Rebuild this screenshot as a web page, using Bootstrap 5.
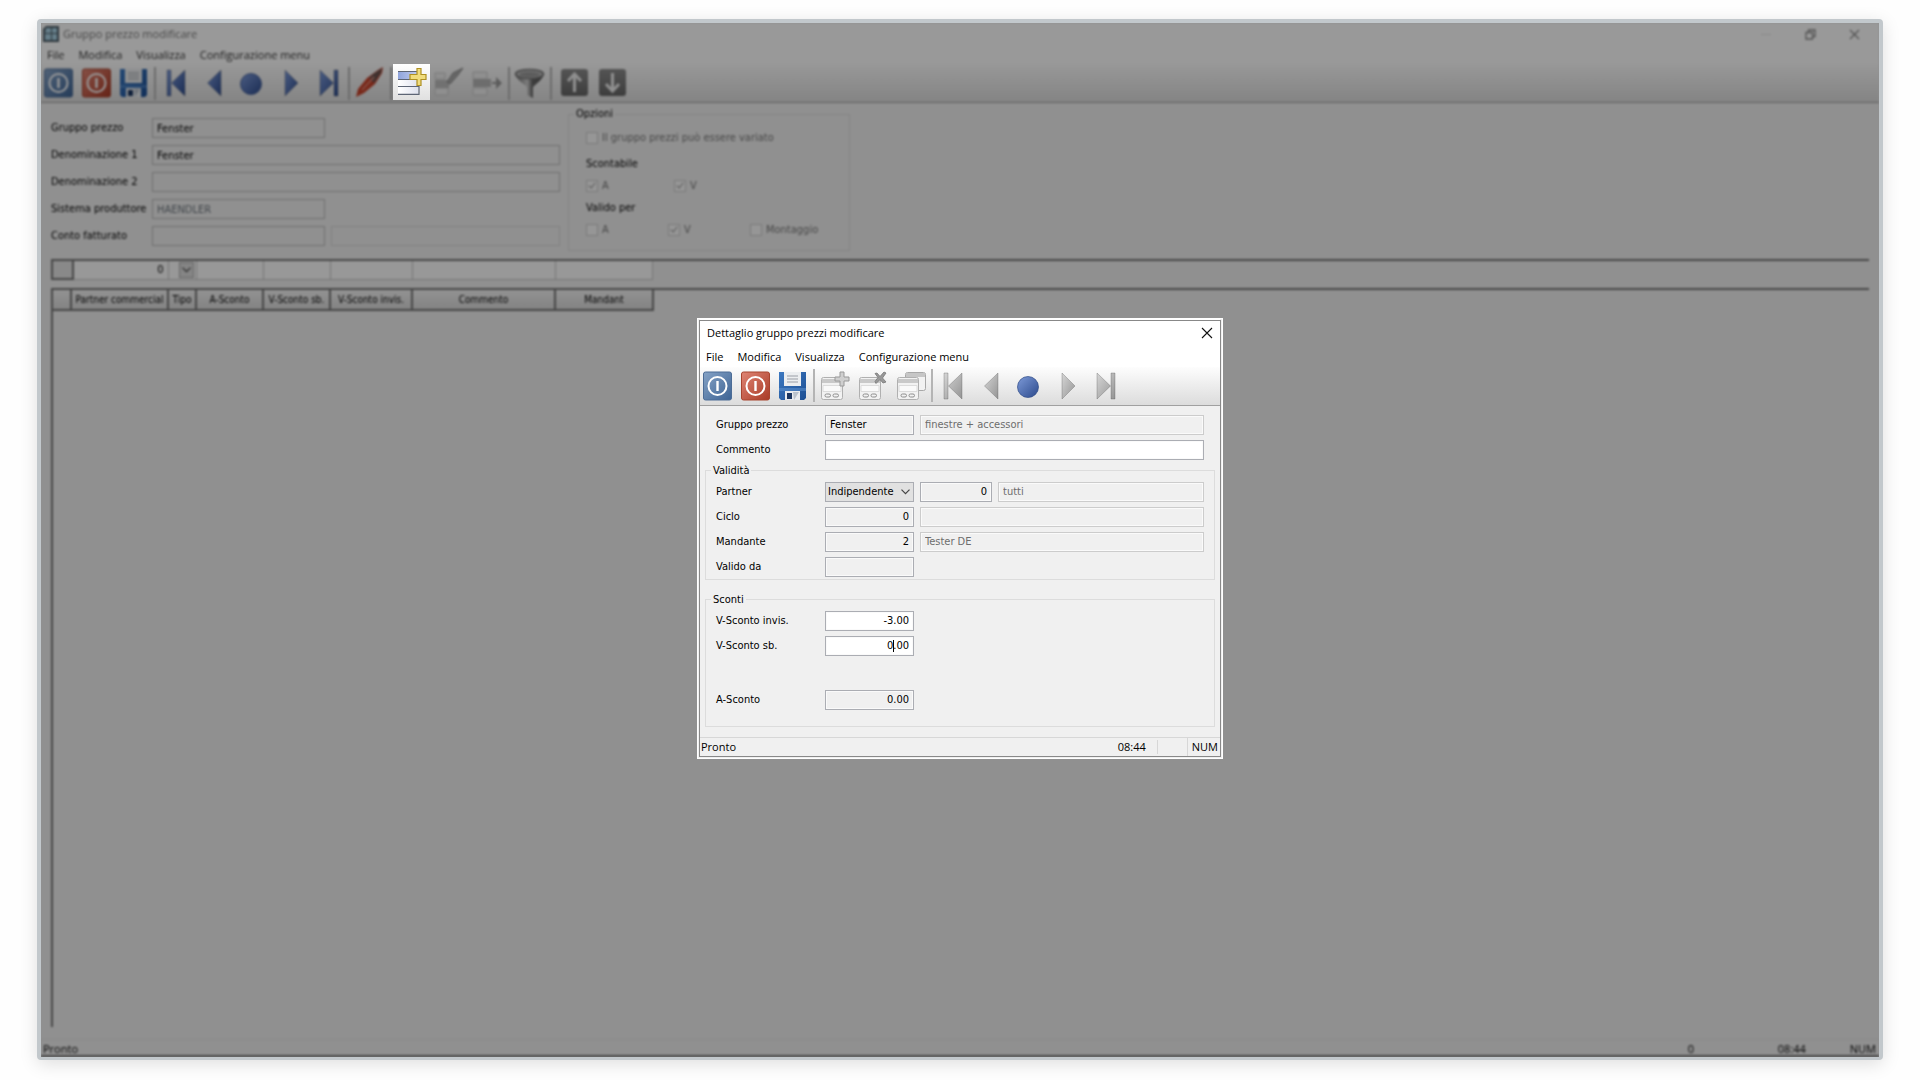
<!DOCTYPE html>
<html lang="it">
<head>
<meta charset="utf-8">
<meta name="viewport" content="width=device-width, initial-scale=1">
<title>Gruppo prezzo modificare</title>
<link href="https://cdn.jsdelivr.net/npm/bootstrap@5.3.0/dist/css/bootstrap.min.css" rel="stylesheet">
<style>
  :root { --ui: "Open Sans", "Noto Sans", sans-serif; --form: "DejaVu Sans Condensed", "Open Sans", sans-serif; }
  body { background: #fefefe; font-family: var(--ui); font-size: 11px; line-height: 14px; color: #000; }
  .page { min-height: 100vh; padding: 19px 37px 20px; }
  .frame { border: solid #c2c8cc; border-width: 4px 4px 3px; border-radius: 4px; box-shadow: 0 4px 18px rgba(0,0,0,.13); background: #909090; overflow: hidden; }
  .dimmed { filter: brightness(.6) blur(1px); background: #f0f0f0; }
  .title-row { background: #fff; height: 22px; padding: 0 3px 0 2px; color: #777; }
  .dimmed .menu-row { color: #333; }
  .menu-row { background: #fff; height: 19px; gap: 14px; padding-left: 6px; }
  .menu-row a { color: inherit; text-decoration: none; }
  .tools { height: 39px; background: linear-gradient(#fdfdfd, #dcdcdc); border-bottom: 1px solid #a0a0a0; padding-left: 1px; }
  .tools-group { gap: 6px; }
  .tool-btn { width: 32px; height: 36px; padding: 0; border: 0; background: none; display: flex; align-items: center; justify-content: center; }
  .tool-btn svg, .spot svg { width: 32px; height: 32px; }
  .tool-sep { width: 2px; height: 33px; background: #b4b4b4; margin: 0 4px; }
  .win-btn { border: 0; background: none; padding: 0; width: 44px; height: 20px; display: flex; align-items: center; justify-content: center; }
  .form-area { font-family: var(--form); }
  .field { height: 20px; border: 1px solid #abadb3; background: #f0f0f0; box-shadow: inset 0 0 0 1px #fafafa; padding: 0 4px; font-size: 11px; line-height: 14px; color: #000; min-width: 0; border-radius: 0; appearance: none; }
  .field.soft { border-color: #ccc; color: #6d6d6d; }
  .field.open { background: #fff; }
  .field:focus { outline: 0; }
  .w-code { width: 89px; }
  .w-num { width: 72px; }
  .next-field { margin-left: 6px; }
  .dimmed .field { border-color: #bbb; box-shadow: none; }
  .dimmed .field.soft { border-color: #d8d8d8; }
  .main-form { width: 519px; padding: 15px 0 0 10px; gap: 7px; }
  .main-form label { width: 101px; }
  .w-main { width: 173px; }
  .group { border: 1px solid #dcdcdc; }
  .group legend { float: none; width: auto; font-size: 11px; line-height: 14px; margin: 0 0 0 -5px; padding: 0 2px; }
  .options { width: 282px; height: 144px; margin: 4px 0 0 8px; padding: 10px 17px 0; }
  .options legend { margin-left: -12px; }
  .options-rows { gap: 8px; }
  .options-cell { width: 88px; color: #777; gap: 4px; }
  .box { appearance: none; width: 12px; height: 12px; margin: 0; border: 1px solid #ccc; background: #fafafa; position: relative; }
  .box:checked::after { content: ""; position: absolute; left: 3px; top: 0; width: 4px; height: 7px; border: solid #999; border-width: 0 1px 1px 0; transform: rotate(40deg); }
  .grid-line { margin: 0 10px; border-top: 2px solid #777; }
  .grid-table { table-layout: fixed; border-collapse: collapse; width: 600px; }
  .grid-table td, .grid-table th { padding: 0; overflow: hidden; white-space: nowrap; text-align: center; font-size: 10px; line-height: 14px; font-weight: 400; }
  .grid-table td { height: 18px; background: #fdfdfd; border-right: 1px solid #c4c4c4; border-bottom: 1px solid #c4c4c4; }
  .grid-table th { height: 20px; background: linear-gradient(#f4f4f4, #dadada); border-right: 2px solid #777; border-bottom: 2px solid #777; }
  .grid-table td.corner { border: 2px solid #777; border-top: 0; background: #e4e4e4; }
  .grid-table input { width: 100%; border: 0; background: none; text-align: right; padding: 0 4px; font-size: 11px; display: block; }
  .grid-table select { width: 15px; height: 16px; border: 1px solid #aaa; background: #ddd; appearance: none; padding: 0; display: block; }
  .drop { position: relative; width: 17px; padding-right: 2px; margin-left: auto; }
  .drop svg { position: absolute; left: 3px; top: 5px; pointer-events: none; }
  .grid-body { border-left: 2px solid #777; margin: 0 10px 12px; }
  .status-main { height: 18px; border-top: 1px solid #e4e4e4; border-bottom: 2px solid #777; padding: 2px 3px 0 2px; }
  .s-zero { width: 90px; }
  .status-main .s-time { width: 72px; }
  .spot { position: absolute; left: 352px; top: 41px; width: 37px; height: 36px; padding: 0; border: 0; background: linear-gradient(#fff, #e0e0e0); display: flex; align-items: center; justify-content: center; }
  .dlg { width: 526px; background: #f0f0f0; border: 1px solid #fff; outline: 1px solid #888; outline-offset: -3px; padding: 0 2px 1px; }
  .dlg-title { height: 29px; background: #fff; padding: 0 7px; }
  .dlg-rows { gap: 5px; }
  .dlg label { width: 109px; flex: none; }
  .dlg .outer { padding: 9px 16px 0; }
  .dlg .group { margin: 0 5px; padding: 4px 10px 2px; }
  .dlg .group.sconti { margin-top: 13px; padding-bottom: 16px; }
  .later { margin-top: 29px; }
  .combo select { background: #e1e1e1; box-shadow: none; padding: 0 2px; width: 100%; }
  .combo svg { position: absolute; right: 4px; top: 7px; pointer-events: none; }
  .caret { position: absolute; right: 20px; top: 4px; width: 1px; height: 12px; background: #000; }
  .dlg-status { height: 20px; margin-top: 10px; border-top: 1px solid #d7d7d7; padding-left: 1px; }
  .dlg-status .s-time { padding-right: 11px; border-right: 1px solid #d7d7d7; }
  .dlg-status .s-gap { width: 30px; border-right: 1px solid #d7d7d7; }
  .dlg-status .s-num { padding: 0 2px 0 4px; }
</style>
<script src="https://cdn.jsdelivr.net/npm/bootstrap@5.3.0/dist/js/bootstrap.bundle.min.js"></script>
</head>
<body>
<svg width="0" height="0" class="position-absolute" aria-hidden="true">
  <defs>
    <linearGradient id="gBlue" x1="0" y1="0" x2="1" y2="1"><stop offset="0" stop-color="#86a3c6"/><stop offset="1" stop-color="#3d6394"/></linearGradient>
    <linearGradient id="gRed" x1="0" y1="0" x2="1" y2="1"><stop offset="0" stop-color="#df8574"/><stop offset="1" stop-color="#a93a26"/></linearGradient>
    <linearGradient id="gNav" x1="0" y1="0" x2="1" y2="1"><stop offset="0" stop-color="#7d9ad8"/><stop offset="1" stop-color="#2c4a8c"/></linearGradient>
    <linearGradient id="gGrey" x1="0" y1="0" x2="1" y2="1"><stop offset="0" stop-color="#d6d6d6"/><stop offset="1" stop-color="#949494"/></linearGradient>
    <linearGradient id="gDark" x1="0" y1="0" x2="0" y2="1"><stop offset="0" stop-color="#8c8c8c"/><stop offset="1" stop-color="#666"/></linearGradient>
    <linearGradient id="gSave" x1="0" y1="0" x2="1" y2="1"><stop offset="0" stop-color="#3c78c0"/><stop offset="1" stop-color="#1d4f94"/></linearGradient>
    <linearGradient id="gRow" x1="0" y1="0" x2="1" y2="0"><stop offset="0" stop-color="#8fa4dc"/><stop offset="1" stop-color="#c3cdf0"/></linearGradient>
    <linearGradient id="gPale" x1="0" y1="0" x2="1" y2="0"><stop offset="0" stop-color="#fff"/><stop offset="1" stop-color="#dfe2ee"/></linearGradient>
    <linearGradient id="gFun" x1="0" y1="0" x2="1" y2="0"><stop offset="0" stop-color="#666"/><stop offset=".42" stop-color="#d0d0d0"/><stop offset=".6" stop-color="#666"/><stop offset="1" stop-color="#555"/></linearGradient>
  </defs>
  <symbol id="i-ok" viewBox="0 0 32 32"><rect x="2.500" y="2" width="28" height="28" rx="2" fill="url(#gBlue)" stroke="#4c6c96"/><circle cx="16.500" cy="16" r="9" fill="none" stroke="#fff" stroke-width="2"/><path d="M16.500 11v10" stroke="#fff" stroke-width="2.400"/></symbol>
  <symbol id="i-no" viewBox="0 0 32 32"><rect x="2.500" y="2" width="28" height="28" rx="2" fill="url(#gRed)" stroke="#a8442f"/><circle cx="16.500" cy="16" r="9" fill="none" stroke="#fff" stroke-width="2"/><path d="M16.500 11v10" stroke="#fff" stroke-width="2.400"/></symbol>
  <symbol id="i-save" viewBox="0 0 32 32"><path d="M2 2h27v26l-2 2H4l-2-2z" fill="url(#gSave)"/><path d="M7 2h17v14H7z" fill="#eceef0"/><path d="M10 6h11M10 9h11M10 12h11" stroke="#b5b9bf" stroke-width="1.300"/><path d="M2 18h27v3H2z" fill="#6ea3dc" opacity=".4"/><path d="M8 21h15v9H8z" fill="#e8ebef"/><path d="M10 23h5v6h-5z" fill="#1a3560"/><path d="M16 22h6l-5 8z" fill="#b9c2cd"/></symbol>
  <symbol id="i-first" viewBox="0 0 32 32"><path d="M7 3h4v26H7zM25 3v26L11.500 16z" stroke-opacity=".4" stroke="#555" stroke-width=".8"/></symbol>
  <symbol id="i-prev" viewBox="0 0 32 32"><path d="M23 3v26L9.500 16z" stroke-opacity=".4" stroke="#555" stroke-width=".8"/></symbol>
  <symbol id="i-dot" viewBox="0 0 32 32"><circle cx="15" cy="17" r="10.500" stroke="#2f4c88" stroke-opacity=".7"/></symbol>
  <symbol id="i-next" viewBox="0 0 32 32"><path d="M11 3v26l13-13z" stroke-opacity=".4" stroke="#555" stroke-width=".8"/></symbol>
  <symbol id="i-last" viewBox="0 0 32 32"><path d="M8 3v26l13.500-13zM22 3h4v26h-4z" stroke-opacity=".4" stroke="#555" stroke-width=".8"/></symbol>
  <symbol id="i-card" viewBox="0 0 32 32"><path d="M2.500 9.500q0-2 2-2h17q2 0 2 2v18q0 2-2 2h-17q-2 0-2-2z" fill="#f2f2f2" stroke="#b0b0b0"/><path d="M3 9h20v4H3z" fill="#c9c9c9"/><path d="M4 15.500h18v6H4z" fill="#fafafa" stroke="#dcdcdc"/><rect x="6" y="24" width="5.500" height="3" rx="1.500" fill="none" stroke="#8e8e8e"/><rect x="14" y="24" width="5.500" height="3" rx="1.500" fill="none" stroke="#8e8e8e"/></symbol>
  <symbol id="i-cadd" viewBox="0 0 32 32"><use href="#i-card" width="32" height="32"/><path d="M21 2h4v5h5v4h-5v5h-4v-5h-5V7h5z" fill="#cfcfcf" stroke="#999"/></symbol>
  <symbol id="i-cdel" viewBox="0 0 32 32"><use href="#i-card" width="32" height="32"/><path d="M20 3l3 3.500L27 2l2 1-3.500 5L29 12l-3 1-3-3.500-4 4-1-2 3-4-3-4z" fill="#999" stroke="#777" stroke-width=".8"/></symbol>
  <symbol id="i-cdup" viewBox="0 0 32 32"><rect x="10.500" y="2.500" width="20" height="18" rx="2" fill="#f2f2f2" stroke="#a8a8a8"/><path d="M11 3h19v4H11z" fill="#c6c6c6"/><use href="#i-card" width="32" height="32"/></symbol>
  <symbol id="i-pen" viewBox="0 0 32 32"><path d="M2 30l2-8 9-11L24 3l5-3-1 6-7 11-11 9z" fill="#c8422a"/><path d="M19 7l9-6-1 5-7 10-5-5z" fill="#6b5350"/><path d="M8 23L20 10" stroke="#e08878" stroke-width="1.500"/></symbol>
  <symbol id="i-rowadd" viewBox="0 0 32 32"><path d="M2 5h20v8H2z" fill="url(#gRow)"/><path d="M2 13h20v7H2zM2 20h20v8H2z" fill="url(#gPale)"/><path d="M2 5.500h20M2 13.500h20M2 20.500h21M2 28.300h21V13" fill="none" stroke="#5d6575" stroke-width="1.200"/><path d="M21 2.500h4v6h5v5h-5v6h-4v-6h-7v-5h7z" fill="#f0dc7c" stroke="#ae9023" stroke-width="1.200"/></symbol>
  <symbol id="i-rowedit" viewBox="0 0 32 32"><path d="M1 6h10v6H1zM1 21h13v7H1z" fill="#eee" stroke="#c9c9c9"/><path d="M1 13h14v8H1z" fill="#bdbdbd"/><path d="M13 15L19 6 29 1 24 8 16 17z" fill="#aaa" stroke="#888"/></symbol>
  <symbol id="i-rowout" viewBox="0 0 32 32"><path d="M1 5h14v7H1zM1 21h14v7H1z" fill="#eee" stroke="#c9c9c9"/><path d="M1 12h18v8H1z" fill="#b5b5b5"/><path d="M20 15h4v-5l6 6-6 6v-5h-4z" fill="#999"/></symbol>
  <symbol id="i-funnel" viewBox="0 0 32 32"><path d="M1 7c1 5 8 9 12 13v8l6 3V20c4-4 10-8 11-13z" fill="url(#gFun)"/><ellipse cx="15.500" cy="7" rx="14" ry="4.500" fill="#bbb" stroke="#777" stroke-width="1.500"/><ellipse cx="15.500" cy="7.500" rx="10" ry="2.500" fill="#999"/></symbol>
  <symbol id="i-up" viewBox="0 0 32 32"><rect x="5" y="2" width="27" height="27" rx="3" fill="url(#gDark)"/><path d="M18.500 25V8M12 14l6.500-7 6.500 7" fill="none" stroke="#eee" stroke-width="3"/></symbol>
  <symbol id="i-down" viewBox="0 0 32 32"><rect x="5" y="2" width="27" height="27" rx="3" fill="url(#gDark)"/><path d="M18.500 6v17M12 17l6.500 7 6.500-7" fill="none" stroke="#eee" stroke-width="3"/></symbol>
  <symbol id="i-chev" viewBox="0 0 9 6"><path d="M.5.7l4 4 4-4" fill="none" stroke="#444" stroke-width="1.200"/></symbol>
</svg>

<main class="page d-flex flex-column position-relative">
  <div class="frame flex-grow-1 d-flex flex-column position-relative">
    <div class="dimmed flex-grow-1 d-flex flex-column">
      <header class="title-row d-flex align-items-center">
        <svg width="16" height="16" viewBox="0 0 16 16" class="me-1" aria-hidden="true"><path d="M3 0h13v16H0V3z" fill="#4b5c66"/><path d="M3 2h5v5H2zM9 2h5v5H9zM2 8h6v6H2zM9 8h5v6H9z" fill="#a9d0e2"/></svg>
        <span class="flex-grow-1">Gruppo prezzo modificare</span>
        <button class="win-btn" type="button" aria-label="Riduci"><svg width="10" height="10"><path d="M0 5.500h10" stroke="#e4e4e4"/></svg></button>
        <button class="win-btn" type="button" aria-label="Ripristina"><svg width="11" height="11"><path d="M1 3.500h6.500V10H1zM3.500 3V1H10v6.500H8" fill="none" stroke="#888" stroke-width="1.300"/></svg></button>
        <button class="win-btn" type="button" aria-label="Chiudi"><svg width="11" height="11"><path d="M1 1l9 9M10 1l-9 9" stroke="#888" stroke-width="1.200"/></svg></button>
      </header>
      <nav class="menu-row d-flex align-items-center"><a href="#">File</a><a href="#">Modifica</a><a href="#">Visualizza</a><a href="#">Configurazione menu</a></nav>
      <div class="tools d-flex align-items-center">
        <div class="tools-group d-flex">
          <button class="tool-btn" type="button" aria-label="OK"><svg><use href="#i-ok"/></svg></button>
          <button class="tool-btn" type="button" aria-label="Annulla"><svg><use href="#i-no"/></svg></button>
          <button class="tool-btn" type="button" aria-label="Salva"><svg><use href="#i-save"/></svg></button>
        </div>
        <div class="tool-sep"></div>
        <div class="tools-group d-flex">
          <button class="tool-btn" type="button" aria-label="Primo"><svg fill="url(#gNav)"><use href="#i-first"/></svg></button>
          <button class="tool-btn" type="button" aria-label="Precedente"><svg fill="url(#gNav)"><use href="#i-prev"/></svg></button>
          <button class="tool-btn" type="button" aria-label="Corrente"><svg fill="url(#gNav)"><use href="#i-dot"/></svg></button>
          <button class="tool-btn" type="button" aria-label="Successivo"><svg fill="url(#gNav)"><use href="#i-next"/></svg></button>
          <button class="tool-btn" type="button" aria-label="Ultimo"><svg fill="url(#gNav)"><use href="#i-last"/></svg></button>
        </div>
        <div class="tool-sep"></div>
        <button class="tool-btn" type="button" aria-label="Modifica"><svg><use href="#i-pen"/></svg></button>
        <div class="tool-sep"></div>
        <div class="tools-group d-flex">
          <div class="tool-btn"></div>
          <button class="tool-btn" type="button" aria-label="Modifica riga"><svg><use href="#i-rowedit"/></svg></button>
          <button class="tool-btn" type="button" aria-label="Sposta riga"><svg><use href="#i-rowout"/></svg></button>
        </div>
        <div class="tool-sep"></div>
        <button class="tool-btn" type="button" aria-label="Filtro"><svg><use href="#i-funnel"/></svg></button>
        <div class="tool-sep"></div>
        <div class="tools-group d-flex">
          <button class="tool-btn" type="button" aria-label="Su"><svg><use href="#i-up"/></svg></button>
          <button class="tool-btn" type="button" aria-label="Giù"><svg><use href="#i-down"/></svg></button>
        </div>
      </div>

      <div class="form-area d-flex align-items-start">
        <form class="main-form d-flex flex-column">
          <div class="d-flex align-items-center"><label for="m1">Gruppo prezzo</label><input id="m1" class="field w-main" value="Fenster"></div>
          <div class="d-flex align-items-center"><label for="m2">Denominazione 1</label><input id="m2" class="field flex-grow-1" value="Fenster"></div>
          <div class="d-flex align-items-center"><label for="m3">Denominazione 2</label><input id="m3" class="field flex-grow-1"></div>
          <div class="d-flex align-items-center"><label for="m4">Sistema produttore</label><input id="m4" class="field w-main text-secondary" value="HAENDLER"></div>
          <div class="d-flex align-items-center"><label for="m5">Conto fatturato</label><input id="m5" class="field w-main"><input class="field soft flex-grow-1 next-field" aria-label="Descrizione conto"></div>
        </form>
        <fieldset class="group options">
          <legend>Opzioni</legend>
          <div class="options-rows d-flex flex-column">
            <label class="options-cell w-100 d-flex align-items-center"><input type="checkbox" class="box">Il gruppo prezzi può essere variato</label>
            <div class="mt-1">Scontabile</div>
            <div class="d-flex">
              <label class="options-cell d-flex align-items-center"><input type="checkbox" class="box" checked>A</label>
              <label class="options-cell d-flex align-items-center"><input type="checkbox" class="box" checked>V</label>
            </div>
            <div>Valido per</div>
            <div class="d-flex">
              <label class="options-cell d-flex align-items-center"><input type="checkbox" class="box">A</label>
              <label class="options-cell d-flex align-items-center"><input type="checkbox" class="box" checked>V</label>
              <label class="options-cell d-flex align-items-center"><input type="checkbox" class="box">Montaggio</label>
            </div>
          </div>
        </fieldset>
      </div>

      <div class="form-area grid-line mt-2">
        <table class="grid-table">
          <colgroup><col width="21"><col width="95"><col width="28"><col width="67"><col width="67"><col width="82"><col width="143"><col width="97"></colgroup>
          <tbody><tr><td class="corner"></td><td><input aria-label="Partner commerciale" value="0"></td><td><div class="drop"><select aria-label="Tipo"><option></option></select><svg width="9" height="6"><use href="#i-chev"/></svg></div></td><td></td><td></td><td></td><td></td><td></td></tr></tbody>
        </table>
      </div>
      <div class="grid-line mt-2"></div>
      <div class="form-area grid-body flex-grow-1">
        <table class="grid-table">
          <colgroup><col width="18"><col width="97"><col width="28"><col width="67"><col width="67"><col width="82"><col width="143"><col width="98"></colgroup>
          <thead><tr><th></th><th>Partner commercial</th><th>Tipo</th><th>A-Sconto</th><th>V-Sconto sb.</th><th>V-Sconto invis.</th><th>Commento</th><th>Mandant</th></tr></thead>
        </table>
      </div>
      <footer class="status-main d-flex align-items-center"><span class="flex-grow-1">Pronto</span><span class="s-zero">0</span><span class="s-time">08:44</span><span>NUM</span></footer>
    </div>
    <button class="spot" type="button" aria-label="Nuova riga"><svg><use href="#i-rowadd"/></svg></button>
  </div>

  <div class="position-absolute top-0 start-0 w-100 h-100 d-flex align-items-center justify-content-center pb-1">
    <section class="dlg" role="dialog" aria-labelledby="dlgTitle">
      <header class="dlg-title d-flex align-items-center">
        <span id="dlgTitle" class="flex-grow-1">Dettaglio gruppo prezzi modificare</span>
        <button class="border-0 bg-transparent p-0 d-flex" type="button" aria-label="Chiudi"><svg width="12" height="12"><path d="M1 1l10 10M11 1L1 11" stroke="#111" stroke-width="1.100"/></svg></button>
      </header>
      <nav class="menu-row d-flex align-items-center"><a href="#">File</a><a href="#">Modifica</a><a href="#">Visualizza</a><a href="#">Configurazione menu</a></nav>
      <div class="tools d-flex align-items-center">
        <div class="tools-group d-flex">
          <button class="tool-btn" type="button" aria-label="OK"><svg><use href="#i-ok"/></svg></button>
          <button class="tool-btn" type="button" aria-label="Annulla"><svg><use href="#i-no"/></svg></button>
          <button class="tool-btn" type="button" aria-label="Salva"><svg><use href="#i-save"/></svg></button>
        </div>
        <div class="tool-sep"></div>
        <div class="tools-group d-flex">
          <button class="tool-btn" type="button" aria-label="Nuovo"><svg><use href="#i-cadd"/></svg></button>
          <button class="tool-btn" type="button" aria-label="Elimina"><svg><use href="#i-cdel"/></svg></button>
          <button class="tool-btn" type="button" aria-label="Duplica"><svg><use href="#i-cdup"/></svg></button>
        </div>
        <div class="tool-sep"></div>
        <div class="tools-group d-flex">
          <button class="tool-btn" type="button" aria-label="Primo"><svg fill="url(#gGrey)"><use href="#i-first"/></svg></button>
          <button class="tool-btn" type="button" aria-label="Precedente"><svg fill="url(#gGrey)"><use href="#i-prev"/></svg></button>
          <button class="tool-btn" type="button" aria-label="Corrente"><svg fill="url(#gNav)"><use href="#i-dot"/></svg></button>
          <button class="tool-btn" type="button" aria-label="Successivo"><svg fill="url(#gGrey)"><use href="#i-next"/></svg></button>
          <button class="tool-btn" type="button" aria-label="Ultimo"><svg fill="url(#gGrey)"><use href="#i-last"/></svg></button>
        </div>
      </div>
      <form class="form-area">
        <div class="outer dlg-rows d-flex flex-column mb-1">
          <div class="d-flex align-items-center"><label for="d1">Gruppo prezzo</label><input id="d1" class="field w-code" value="Fenster"><input class="field soft flex-grow-1 next-field" aria-label="Descrizione" value="finestre + accessori"></div>
          <div class="d-flex align-items-center"><label for="d2">Commento</label><input id="d2" class="field open flex-grow-1"></div>
        </div>
        <fieldset class="group">
          <legend>Validità</legend>
          <div class="dlg-rows d-flex flex-column">
            <div class="d-flex align-items-center"><label for="d3">Partner</label><div class="combo w-code position-relative d-flex"><select id="d3" class="field"><option>Indipendente</option></select><svg width="9" height="6"><use href="#i-chev"/></svg></div><input class="field w-num text-end next-field" aria-label="Codice partner" value="0"><input class="field soft flex-grow-1 next-field" aria-label="Nome partner" value="tutti"></div>
            <div class="d-flex align-items-center"><label for="d4">Ciclo</label><input id="d4" class="field w-code text-end" value="0"><input class="field soft flex-grow-1 next-field" aria-label="Nome ciclo"></div>
            <div class="d-flex align-items-center"><label for="d5">Mandante</label><input id="d5" class="field w-code text-end" value="2"><input class="field soft flex-grow-1 next-field" aria-label="Nome mandante" value="Tester DE"></div>
            <div class="d-flex align-items-center"><label for="d6">Valido da</label><input id="d6" class="field w-code"></div>
          </div>
        </fieldset>
        <fieldset class="group sconti">
          <legend>Sconti</legend>
          <div class="dlg-rows d-flex flex-column">
            <div class="d-flex align-items-center"><label for="d7">V-Sconto invis.</label><input id="d7" class="field open w-code text-end" value="-3.00"></div>
            <div class="d-flex align-items-center"><label for="d8">V-Sconto sb.</label><div class="position-relative d-flex"><input id="d8" class="field open w-code text-end" value="0.00"><span class="caret"></span></div></div>
            <div class="later d-flex align-items-center"><label for="d9">A-Sconto</label><input id="d9" class="field w-code text-end" value="0.00"></div>
          </div>
        </fieldset>
      </form>
      <footer class="dlg-status d-flex align-items-center"><span class="flex-grow-1">Pronto</span><span class="s-time">08:44</span><span class="s-gap align-self-stretch"></span><span class="s-num">NUM</span></footer>
    </section>
  </div>
</main>
</body>
</html>
